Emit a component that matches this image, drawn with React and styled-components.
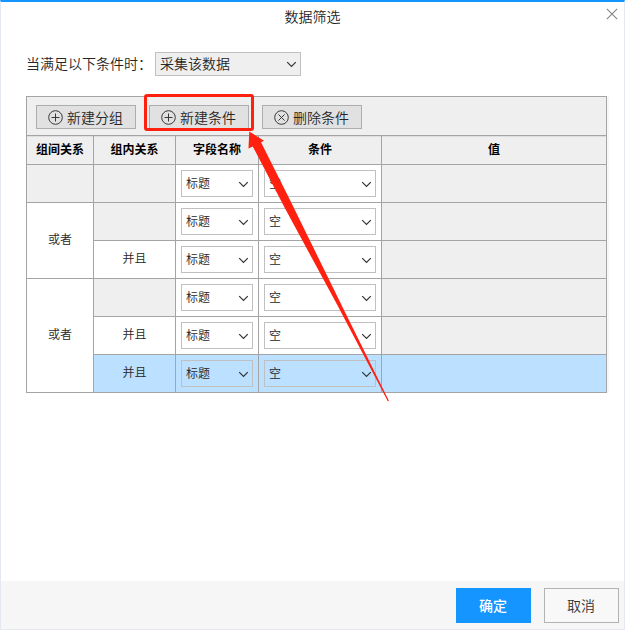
import React from "react";
import styled, { createGlobalStyle, css } from "styled-components";

const GlobalStyle = createGlobalStyle`
  * { box-sizing: border-box; }
  body {
    margin: 0;
    overflow: hidden;
    background: #fff;
    color: #262626;
    font: 350 12px/16px "Noto Sans CJK SC DemiLight", "Noto Sans CJK SC", sans-serif;
  }
  button { font: inherit; color: inherit; }
`;

const Dialog = styled.div`
  position: relative;
  display: flex;
  flex-direction: column;
  width: 625px;
  height: 630px;
  border: 1px solid #e3e8f2;
  border-top: 2px solid #1495ff;
  background: #fff;
`;

const TitleBar = styled.header`
  display: grid;
  grid-template-columns: 26px 1fr 26px;
  align-items: start;
  height: 50px;
`;

const Title = styled.h1`
  grid-column: 2;
  margin: 4px 0 0;
  text-align: center;
  font-size: 14px;
  line-height: 20px;
  font-weight: 350;
`;

const CloseButton = styled.button`
  display: flex;
  margin: 6px 0 0 8px;
  padding: 0;
  width: 12px;
  height: 12px;
  border: 0;
  background: none;
`;

const MatchLine = styled.div`
  display: flex;
  align-items: center;
  height: 24px;
  margin-left: 25px;
  font-size: 14px;
`;

const MatchLabel = styled.label`
  width: 129px;
  padding-bottom: 2px;
  white-space: nowrap;
`;

const SelectBox = styled.div`
  display: flex;
  align-items: center;
  justify-content: space-between;
  width: ${(p) => p.$width}px;
  height: ${(p) => p.$height}px;
  padding: 0 3px 0 4px;
  border: 1px solid #c0c0c0;
  background: ${(p) => p.$fill};
  line-height: 1;
  svg { margin-top: ${(p) => p.$drop}px; }
  span { padding-bottom: 2px; }
`;

const Table = styled.section`
  margin: 20px 0 0 25px;
  width: 581px;
  border: 1px solid #a4a4a4;
  background: #a4a4a4;
  box-shadow: 2px 0 0 #f7f7f7;
`;

const Toolbar = styled.div`
  display: flex;
  gap: 13px;
  height: 39px;
  padding: 8px 9px 0;
  border-bottom: 1px solid #a4a4a4;
  background: #efefef;
`;

const ToolButton = styled.button`
  display: flex;
  align-items: center;
  justify-content: center;
  gap: 4px;
  width: 100px;
  height: 24px;
  padding: 0 1px 0 0;
  border: 1px solid #adadad;
  background: #e1e1e1;
  font-size: 14px;
  line-height: 20px;
  white-space: nowrap;
  svg { flex: none; }
  span { padding-bottom: 1px; }
`;

const Grid = styled.div`
  display: grid;
  grid-template-columns: 66px 81px 82px 122px 224px;
  grid-template-rows: 28px repeat(6, 37px);
  gap: 1px;
`;

const HeaderCell = styled.div`
  display: flex;
  align-items: center;
  justify-content: center;
  padding-bottom: 3px;
  border-top: 1px solid #dedede;
  background: #efefef;
  color: #000;
  font-family: "Noto Sans CJK SC", sans-serif;
  font-weight: 700;
`;

const tones = { plain: "#fff", muted: "#efefef", selected: "#bce0ff" };

const Cell = styled.div`
  display: flex;
  align-items: center;
  justify-content: center;
  background: ${(p) => tones[p.$tone]};
  ${(p) => p.$span && css`grid-row: span ${p.$span};`}
`;

const CellText = styled.span`
  padding-bottom: 4px;
`;

const Footer = styled.footer`
  display: flex;
  justify-content: flex-end;
  gap: 13px;
  height: 48px;
  margin-top: auto;
  padding: 7px 5px 0 0;
  background: #f6f6f6;
`;

const FooterButton = styled.button`
  width: 75px;
  height: 35px;
  padding: 0 1px 1px 0;
  border: 1px solid ${(p) => (p.$primary ? "#1495ff" : "#b3b3b3")};
  background: ${(p) => (p.$primary ? "#1495ff" : "#f8f8f8")};
  color: ${(p) => (p.$primary ? "#fff" : "#333")};
  font-family: "Noto Sans CJK SC", sans-serif;
  font-size: 14px;
  line-height: 20px;
  font-weight: ${(p) => (p.$primary ? 500 : 350)};
`;

const Annotation = styled.svg`
  position: absolute;
  left: -1px;
  top: -2px;
  pointer-events: none;
`;

const Chevron = () => (
  <svg width="11" height="7" viewBox="0 0 11 7" fill="none" stroke="#333" strokeWidth="1.2">
    <path d="M1.2 1.2 5.5 5.5l4.3-4.3" />
  </svg>
);

const CircleIcon = ({ cross }) => (
  <svg width="15" height="15" viewBox="0 0 15 15" fill="none" stroke="#383838">
    <circle cx="7.5" cy="7.5" r="6.8" />
    <path d={cross ? "m4.4 4.4 6.2 6.2m0-6.2-6.2 6.2" : "M3.5 7.5h8M7.5 3.5v8"} />
  </svg>
);

const Select = ({ value, width, height = 27, fill = "transparent", drop = 1 }) => (
  <SelectBox $width={width} $height={height} $fill={fill} $drop={drop}>
    <span>{value}</span>
    <Chevron />
  </SelectBox>
);

const headings = ["组间关系", "组内关系", "字段名称", "条件", "值"];

const rows = [
  { group: { label: "", span: 1 }, relation: "" },
  { group: { label: "或者", span: 2 }, relation: "" },
  { relation: "并且" },
  { group: { label: "或者", span: 3 }, relation: "" },
  { relation: "并且" },
  { relation: "并且", selected: true },
];

const ConditionRow = ({ group, relation, selected }) => {
  const tone = selected ? "selected" : "plain";
  return (
    <>
      {group && (
        <Cell $span={group.span} $tone={group.label ? "plain" : "muted"}>
          <CellText>{group.label}</CellText>
        </Cell>
      )}
      <Cell $tone={relation ? tone : "muted"}><CellText>{relation}</CellText></Cell>
      <Cell $tone={tone}><Select value="标题" width={72} /></Cell>
      <Cell $tone={tone}><Select value="空" width={112} /></Cell>
      <Cell $tone={selected ? "selected" : "muted"} />
    </>
  );
};

export default function App() {
  return (
    <>
      <GlobalStyle />
      <Dialog>
        <TitleBar>
          <Title>数据筛选</Title>
          <CloseButton aria-label="关闭">
            <svg width="12" height="12" viewBox="0 0 12 12" stroke="#858585" strokeWidth="1.1">
              <path d="m.8.8 10.4 10.4m0-10.4L.8 11.2" />
            </svg>
          </CloseButton>
        </TitleBar>
        <MatchLine>
          <MatchLabel>当满足以下条件时：</MatchLabel>
          <Select value="采集该数据" width={146} height={24} fill="#efefef" drop={0} />
        </MatchLine>
        <Table>
          <Toolbar>
            <ToolButton><CircleIcon /><span>新建分组</span></ToolButton>
            <ToolButton><CircleIcon /><span>新建条件</span></ToolButton>
            <ToolButton><CircleIcon cross /><span>删除条件</span></ToolButton>
          </Toolbar>
          <Grid>
            {headings.map((h) => <HeaderCell key={h}>{h}</HeaderCell>)}
            {rows.map((row, i) => <ConditionRow key={i} {...row} />)}
          </Grid>
        </Table>
        <Footer>
          <FooterButton $primary>确定</FooterButton>
          <FooterButton>取消</FooterButton>
        </Footer>
        <Annotation width="625" height="630" viewBox="0 0 625 630">
          <rect x="145.5" y="95.5" width="107" height="34" rx="1.5" fill="none" stroke="#ff2010" strokeWidth="3" />
          <path fill="#ff2010" d="m249.3 131.5 14.7 9.2-3 1.6L289.5 199l52 106L389 401l-1.2.3L337.3 305l-52.5-97-32-61.5-4.3 2z" />
        </Annotation>
      </Dialog>
    </>
  );
}
